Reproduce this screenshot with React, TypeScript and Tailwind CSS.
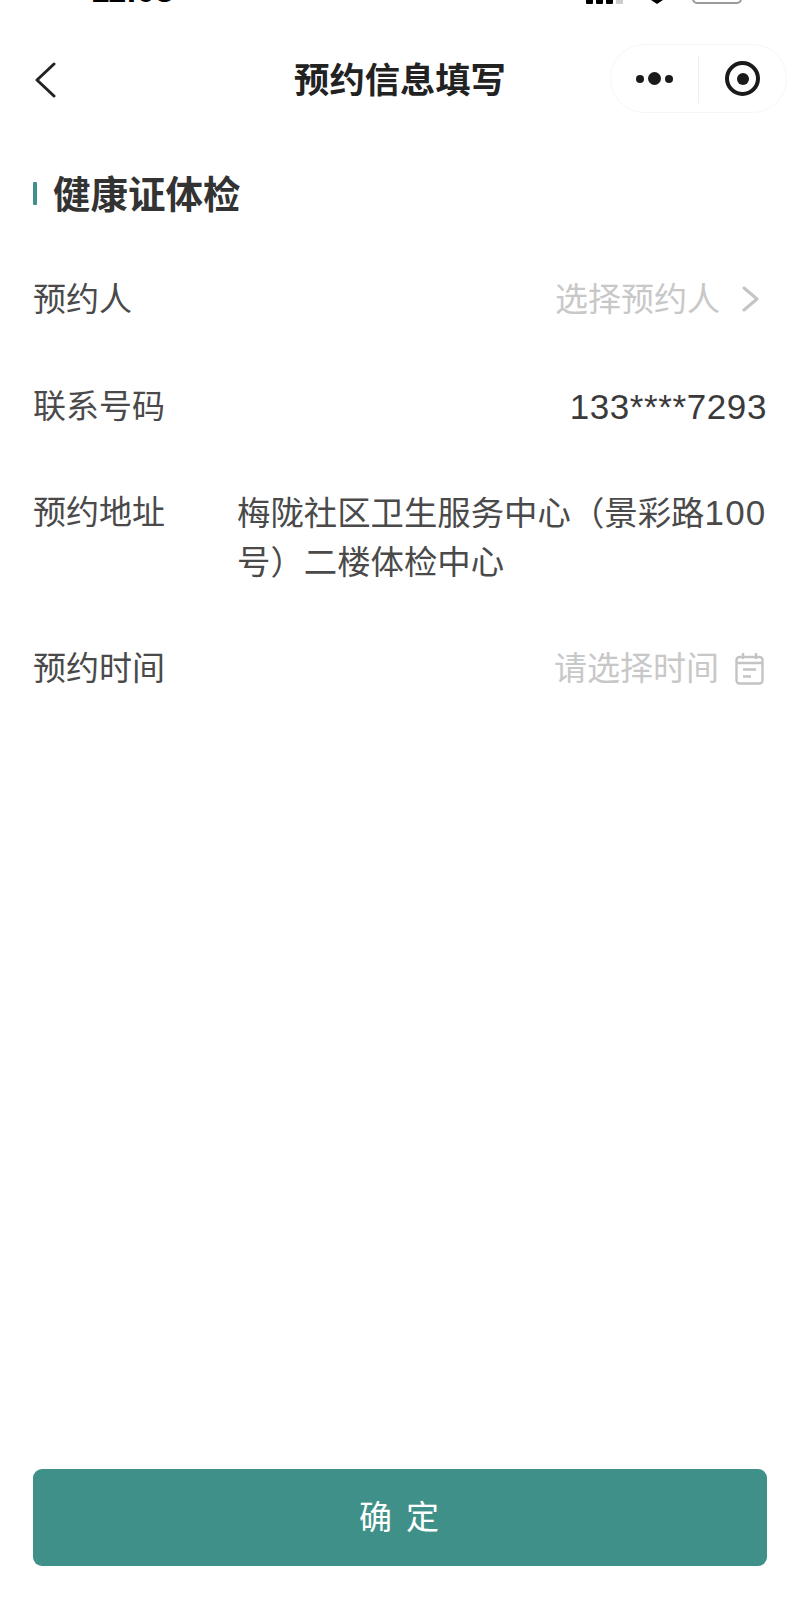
const cjk = "font-['Liberation_Sans','Noto_Sans_CJK_SC',sans-serif]";

function Row({ label, children }: { label: string; children: React.ReactNode }) {
  return (
    <div className="flex justify-between px-[33px]">
      <span className="text-[33px] leading-[49px] text-[#4a4a4a] shrink-0">{label}</span>
      {children}
    </div>
  );
}

export default function App() {
  return (
    <div className={`${cjk} w-[800px] h-[1606px] bg-white flex flex-col overflow-hidden`}>
      {/* Status bar, cut off by the top of the picture */}
      <div className="h-[48px] shrink-0 relative overflow-hidden">
        <span className="absolute left-[91px] top-[-26px] text-[33px] leading-[33px] font-bold text-black">11:08</span>
        <div className="absolute left-[586px] top-[-14px] flex items-end gap-[3px]">
          <div className="w-[7px] h-[18px] bg-black rounded-[1px]" />
          <div className="w-[7px] h-[18px] bg-black rounded-[1px]" />
          <div className="w-[7px] h-[18px] bg-black rounded-[1px]" />
          <div className="w-[7px] h-[18px] bg-[#cccccc] rounded-[1px]" />
        </div>
        <div className="absolute left-[651px] top-0 w-0 h-0 border-x-[6px] border-x-transparent border-t-[4px] border-t-black" />
        <div className="absolute left-[692px] top-[-14px] w-[50px] h-[18px] border-2 border-[#9a9a9a] rounded-[5px]" />
      </div>

      {/* Nav bar */}
      <div className="h-[64px] shrink-0 flex items-center relative">
        <svg className="ml-[34px]" width="22" height="36" viewBox="0 0 22 36" fill="none" stroke="#222222" strokeWidth="3" strokeLinecap="round" strokeLinejoin="round">
          <path d="M20 2 3 18l17 16" />
        </svg>
        <h1 className="absolute left-0 right-0 top-[8px] text-center text-[35.3px] leading-[50px] font-bold text-[#222222]">预约信息填写</h1>
        <div className="absolute left-[610px] top-[-4px] w-[177px] h-[69px] rounded-[35px] border border-[#f6f6f6] flex items-center">
          <div className="w-[87px] h-full flex items-center justify-center gap-[4px]">
            <div className="w-[8px] h-[8px] rounded-full bg-[#1a1a1a]" />
            <div className="w-[13px] h-[13px] rounded-full bg-[#1a1a1a]" />
            <div className="w-[8px] h-[8px] rounded-full bg-[#1a1a1a]" />
          </div>
          <div className="w-px h-[48px] bg-[#f0f0f0]" />
          <div className="ml-[26px] w-[35px] h-[35px] rounded-full border-[4px] border-[#1a1a1a] flex items-center justify-center">
            <div className="w-[12px] h-[12px] rounded-full bg-[#1a1a1a]" />
          </div>
        </div>
      </div>

      {/* Section title */}
      <div className="mt-[56px] px-[33px] flex items-center gap-[16px]">
        <div className="w-[4px] h-[23px] bg-[#3f9088] rounded-[1px] -mt-[3px]" />
        <h2 className="text-[37.5px] leading-[54px] font-bold text-[#333333]">健康证体检</h2>
      </div>

      <div className="mt-[53px] flex flex-col">
        <Row label="预约人">
          <div className="flex items-center gap-[22px] text-[#c8c8c8] pr-[8px]">
            <span className="text-[33px] leading-[49px]">选择预约人</span>
            <svg className="-mt-[2px]" width="17" height="26" viewBox="0 0 17 26" fill="none" stroke="#c4c4c4" strokeWidth="3" strokeLinecap="round" strokeLinejoin="round">
              <path d="M2 2 15 13 2 24" />
            </svg>
          </div>
        </Row>
        <div className="h-[58px]" />
        <Row label="联系号码">
          <span className="text-[35px] leading-[49px] tracking-[0.6px] text-[#3a3a3a]">133****7293</span>
        </Row>
        <div className="h-[57px]" />
        <Row label="预约地址">
          <div className="w-[530px] text-[33.4px] leading-[49px] text-[#4a4a4a]">
            梅陇社区卫生服务中心（景彩路<span className="text-[35px] tracking-[1.2px]">100</span>号）二楼体检中心
          </div>
        </Row>
        <div className="h-[57px]" />
        <Row label="预约时间">
          <div className="flex items-center gap-[16px] text-[#c8c8c8] pr-[3px]">
            <span className="text-[33px] leading-[49px]">请选择时间</span>
            <svg width="29" height="32" viewBox="0 0 29 32" fill="none" stroke="#c4c4c4" strokeWidth="2.4">
              <rect x="1.5" y="4" width="26" height="26.5" rx="3" />
              <path d="M8 0v6M21 0v6M1.5 10h26M8 16.5h13M8 23.5h8" />
            </svg>
          </div>
        </Row>
      </div>

      <div className="mt-auto mb-[40px] mx-[33px] h-[97px] rounded-[9px] bg-[#3f9088] flex items-center justify-center">
        <span className="text-[33px] leading-[49px] text-white tracking-[14px] pl-[12px]">确定</span>
      </div>
    </div>
  );
}
